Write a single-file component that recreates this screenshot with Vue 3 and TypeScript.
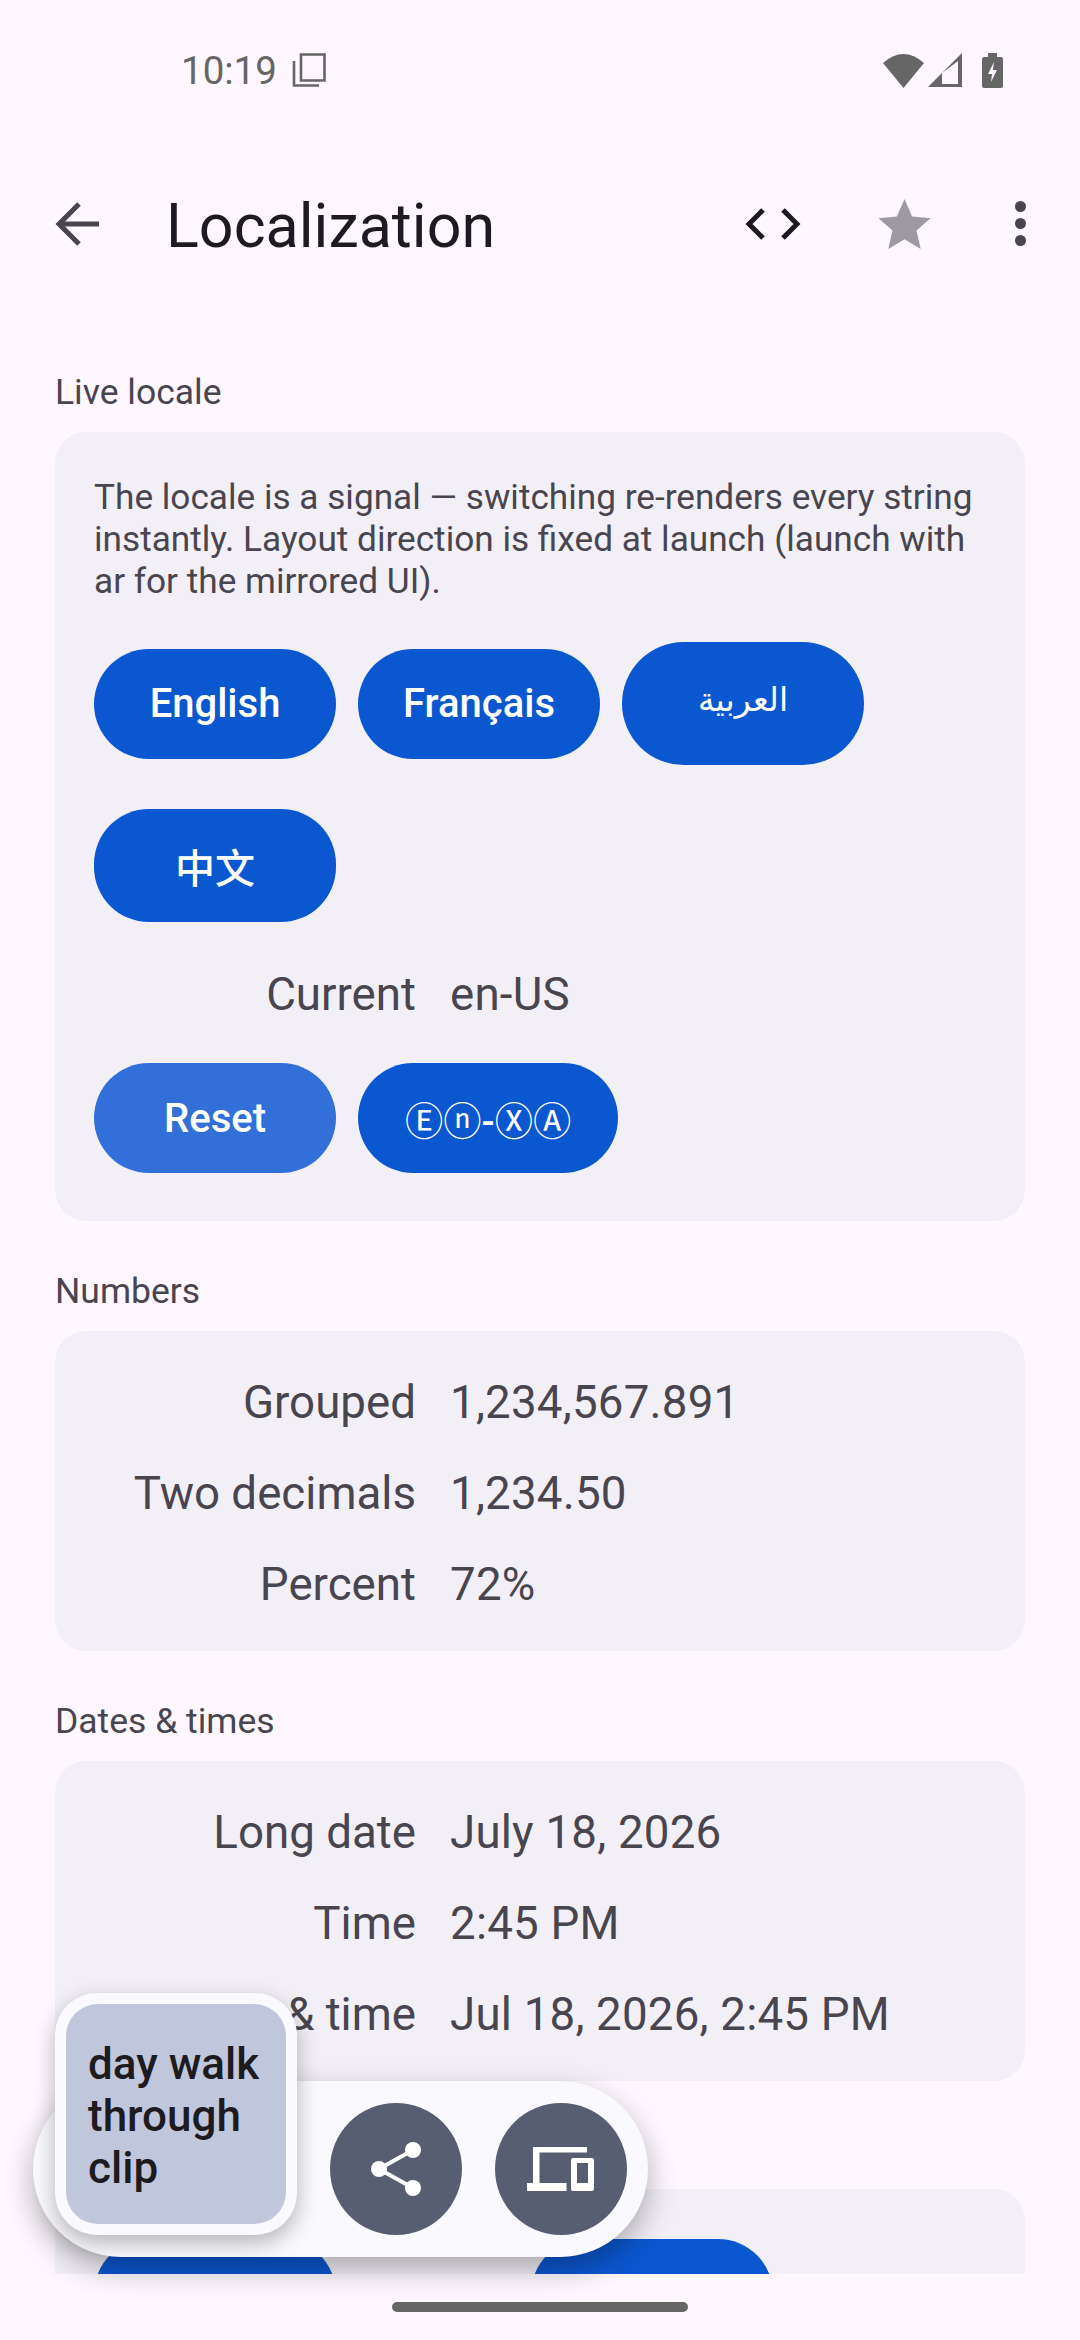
<template>
  <div class="screen">
    <div class="status-bar">
      <div class="status-left">
        <span class="clock">10:19</span>
        <svg class="copy-icon" width="34" height="34" viewBox="0 0 34 34">
          <path d="M9 1.500h23.500v26H9z" fill="none" stroke="#666" stroke-width="2.6" />
          <path d="M2 8v24.500h25" fill="none" stroke="#666" stroke-width="2.6" />
        </svg>
      </div>
      <div class="status-right">
        <svg class="wifi" width="41" height="34" viewBox="0 0 41 34">
          <path d="M0 9Q20.500-9 41 9L20.500 34z" fill="#666" />
        </svg>
        <svg class="signal" width="34" height="34" viewBox="0 0 34 34">
          <path fill-rule="evenodd" d="M34 0v34H0zM30 8 14 20v11h16z" fill="#666" />
        </svg>
        <svg width="21" height="35" viewBox="0 0 21 35">
          <path d="M6 0h9v4h4a2 2 0 0 1 2 2v27a2 2 0 0 1-2 2H2a2 2 0 0 1-2-2V6a2 2 0 0 1 2-2h4z" fill="#666" />
          <path d="M12 9 6 21h4l-1 8 6-12h-4z" fill="#fef7ff" />
        </svg>
      </div>
    </div>

    <div class="app-bar">
      <svg class="back" width="46" height="44" viewBox="0 0 46 44">
        <path d="M44 22H5M24 2 4 22l20 20" fill="none" stroke="#49454f" stroke-width="5" />
      </svg>
      <h1>Localization</h1>
      <svg class="code" width="56" height="34" viewBox="0 0 56 34">
        <path d="M18 3 4 17l14 14M38 3l14 14-14 14" fill="none" stroke="#1d1b20" stroke-width="5" />
      </svg>
      <svg class="star" width="53" height="50" viewBox="0 0 52 50">
        <path d="M26 0l7.600 17.600L52 19.200 38 31.600 42.200 50 26 40.200 9.800 50 14 31.600 0 19.200l18.400-1.600z" fill="#9c99a0" />
      </svg>
      <div class="dots"><i></i><i></i><i></i></div>
    </div>

    <main class="content">
      <h2 class="top">Live locale</h2>
      <section class="card first">
        <p class="intro">The locale is a signal — switching re-renders every string instantly. Layout direction is fixed at launch (launch with ar for the mirrored UI).</p>
        <div class="btn-wrap">
          <button v-for="l in locales" :key="l.label" :class="['btn', l.cls]">
            <span>{{ l.label }}</span>
          </button>
        </div>
        <div class="row current">
          <span class="key">Current</span>
          <span class="val">en-US</span>
        </div>
        <div class="btn-wrap">
          <button class="btn reset">Reset</button>
          <button class="btn pseudo"><span>Ⓔⓝ</span>-<span>ⓍⒶ</span></button>
        </div>
      </section>

      <h2>Numbers</h2>
      <section class="card">
        <div v-for="r in numbers" :key="r[0]" class="row">
          <span class="key">{{ r[0] }}</span>
          <span class="val">{{ r[1] }}</span>
        </div>
      </section>

      <h2>Dates &amp; times</h2>
      <section class="card">
        <div v-for="r in dates" :key="r[0]" class="row">
          <span class="key">{{ r[0] }}</span>
          <span class="val">{{ r[1] }}</span>
        </div>
      </section>

      <section class="card last">
        <div class="btn-wrap stepper">
          <button class="btn"></button>
          <button class="btn"></button>
        </div>
      </section>
    </main>

    <div class="float-bar">
      <div class="spacer"></div>
      <div class="round">
        <svg width="56" height="56" viewBox="0 0 56 56">
          <path d="M45 9 11 28l34 19" fill="none" stroke="#fff" stroke-width="4" />
          <circle cx="45" cy="9" r="8" fill="#fff" />
          <circle cx="11" cy="28" r="8" fill="#fff" />
          <circle cx="45" cy="47" r="8" fill="#fff" />
        </svg>
      </div>
      <div class="round">
        <svg width="68" height="56" viewBox="0 0 68 56">
          <path d="M6 6h54v5.500H12.500V42h27v8H0v-8h6z" fill="#fff" />
          <path fill-rule="evenodd" d="M46 17h19a2 2 0 0 1 2 2v29a2 2 0 0 1-2 2H46a2 2 0 0 1-2-2V19a2 2 0 0 1 2-2zm4 5v20h11V22z" fill="#fff" />
        </svg>
      </div>
    </div>
    <div class="clip-card">
      <div class="clip-inner">day walk through clip</div>
    </div>

    <div class="nav-pill"></div>
  </div>
</template>

<script setup lang="ts">
const locales = [
  { label: "English", cls: "" },
  { label: "Français", cls: "" },
  { label: "العربية", cls: "arabic" },
  { label: "中文", cls: "cjk" },
];

const numbers: [string, string][] = [
  ["Grouped", "1,234,567.891"],
  ["Two decimals", "1,234.50"],
  ["Percent", "72%"],
];

const dates: [string, string][] = [
  ["Long date", "July 18, 2026"],
  ["Time", "2:45 PM"],
  ["Date & time", "Jul 18, 2026, 2:45 PM"],
];
</script>

<style>
html,
body {
  margin: 0;
  background: #fef7ff;
}
</style>

<style scoped>
.screen {
  position: relative;
  width: 1080px;
  height: 2340px;
  overflow: hidden;
  background: #fef7ff;
  font-family: Roboto, "Noto Sans CJK SC", sans-serif;
  color: #49454f;
}

.status-bar {
  display: flex;
  justify-content: space-between;
  align-items: center;
  height: 50px;
  padding: 45px 77px 0 181px;
}

.status-left,
.status-right {
  display: flex;
  align-items: center;
}

.clock {
  font-size: 38.5px;
  color: #666;
}

.copy-icon {
  margin-left: 15px;
}

.status-right {
  gap: 20px;
}

.wifi {
  margin-top: 2px;
}

.signal {
  margin-left: -16px;
}

.app-bar {
  display: flex;
  align-items: center;
  height: 147px;
  margin-top: 55px;
  padding-left: 55px;
}

.app-bar h1 {
  flex: 1;
  margin: 0 0 0 65px;
  padding-top: 5px;
  font-size: 61px;
  font-weight: 400;
  color: #1d1b20;
}

.code {
  margin-right: 77px;
}

.star {
  margin-right: 84px;
}

.dots {
  display: flex;
  flex-direction: column;
  gap: 6px;
  margin-right: 54px;
}

.dots i {
  display: block;
  width: 11px;
  height: 11px;
  border-radius: 50%;
  background: #49454f;
}

.content {
  height: 1977px;
  padding: 0 55px;
  overflow: hidden;
}

h2 {
  margin: 49px 0 19px;
  font-size: 35.500px;
  line-height: 42px;
  font-weight: 400;
  color: #49454f;
}

h2.top {
  margin-top: 74px;
}

.card {
  padding: 26px 39px 21px;
  border-radius: 31px;
  background: #f3eff7;
}

.card.first {
  padding: 44px 39px 48px;
}

.card.last {
  margin-top: 108px;
  padding-top: 50px;
}

.intro {
  margin: 0 0 40px;
  font-size: 35.200px;
  line-height: 42px;
  color: #49454f;
}

.btn-wrap {
  display: flex;
  flex-wrap: wrap;
  gap: 44px 22px;
  align-items: center;
}

.stepper {
  gap: 195px;
}

.btn {
  min-width: 242px;
  height: 110px;
  padding: 0 40px;
  border: none;
  border-radius: 55px;
  background: #0b57d0;
  color: #fff;
  font-family: Roboto, "Noto Sans CJK SC", sans-serif;
  font-size: 40px;
  font-weight: 500;
}

.btn.arabic {
  height: 123px;
  border-radius: 62px;
  font-weight: 400;
  font-family: "DejaVu Sans", sans-serif;
  font-size: 33px;
}

.btn.arabic span {
  position: relative;
  top: -4px;
}

.btn.cjk {
  height: 113px;
}

.btn.reset {
  background: #326fd9;
}

.btn.pseudo {
  min-width: 258px;
  padding: 0 47px;
  font-size: 38.300px;
}

.btn.pseudo span {
  font-weight: 400;
}

.row {
  display: flex;
  gap: 34px;
  align-items: center;
  min-height: 91px;
  font-size: 45.700px;
}

.row.current {
  margin: 27px 0 23px;
}

.key {
  width: 322px;
  text-align: right;
}

.val {
  letter-spacing: 0.2px;
}

.float-bar {
  position: absolute;
  left: 33px;
  top: 2081px;
  display: flex;
  align-items: center;
  gap: 33px;
  height: 176px;
  padding: 0 21px 0 0;
  border-radius: 88px;
  background: #f9f9fe;
  box-shadow: 0 12px 30px rgba(0, 0, 0, 0.3);
}

.spacer {
  width: 264px;
}

.round {
  display: flex;
  align-items: center;
  justify-content: center;
  width: 132px;
  height: 132px;
  border-radius: 50%;
  background: #585e71;
}

.clip-card {
  position: absolute;
  left: 55px;
  top: 1993px;
  width: 242px;
  height: 242px;
  padding: 11px;
  box-sizing: border-box;
  border-radius: 42px;
  background: #f9f9fe;
  box-shadow: 0 8px 22px rgba(0, 0, 0, 0.28);
}

.clip-inner {
  display: flex;
  align-items: center;
  width: 100%;
  height: 100%;
  box-sizing: border-box;
  padding: 3px 22px 0;
  border-radius: 32px;
  background: #c0c7dc;
  color: #1d1b20;
  font-size: 44px;
  line-height: 52px;
  font-weight: 500;
}

.nav-pill {
  position: absolute;
  left: 392px;
  top: 2302px;
  width: 296px;
  height: 10px;
  border-radius: 5px;
  background: #666;
}
</style>
